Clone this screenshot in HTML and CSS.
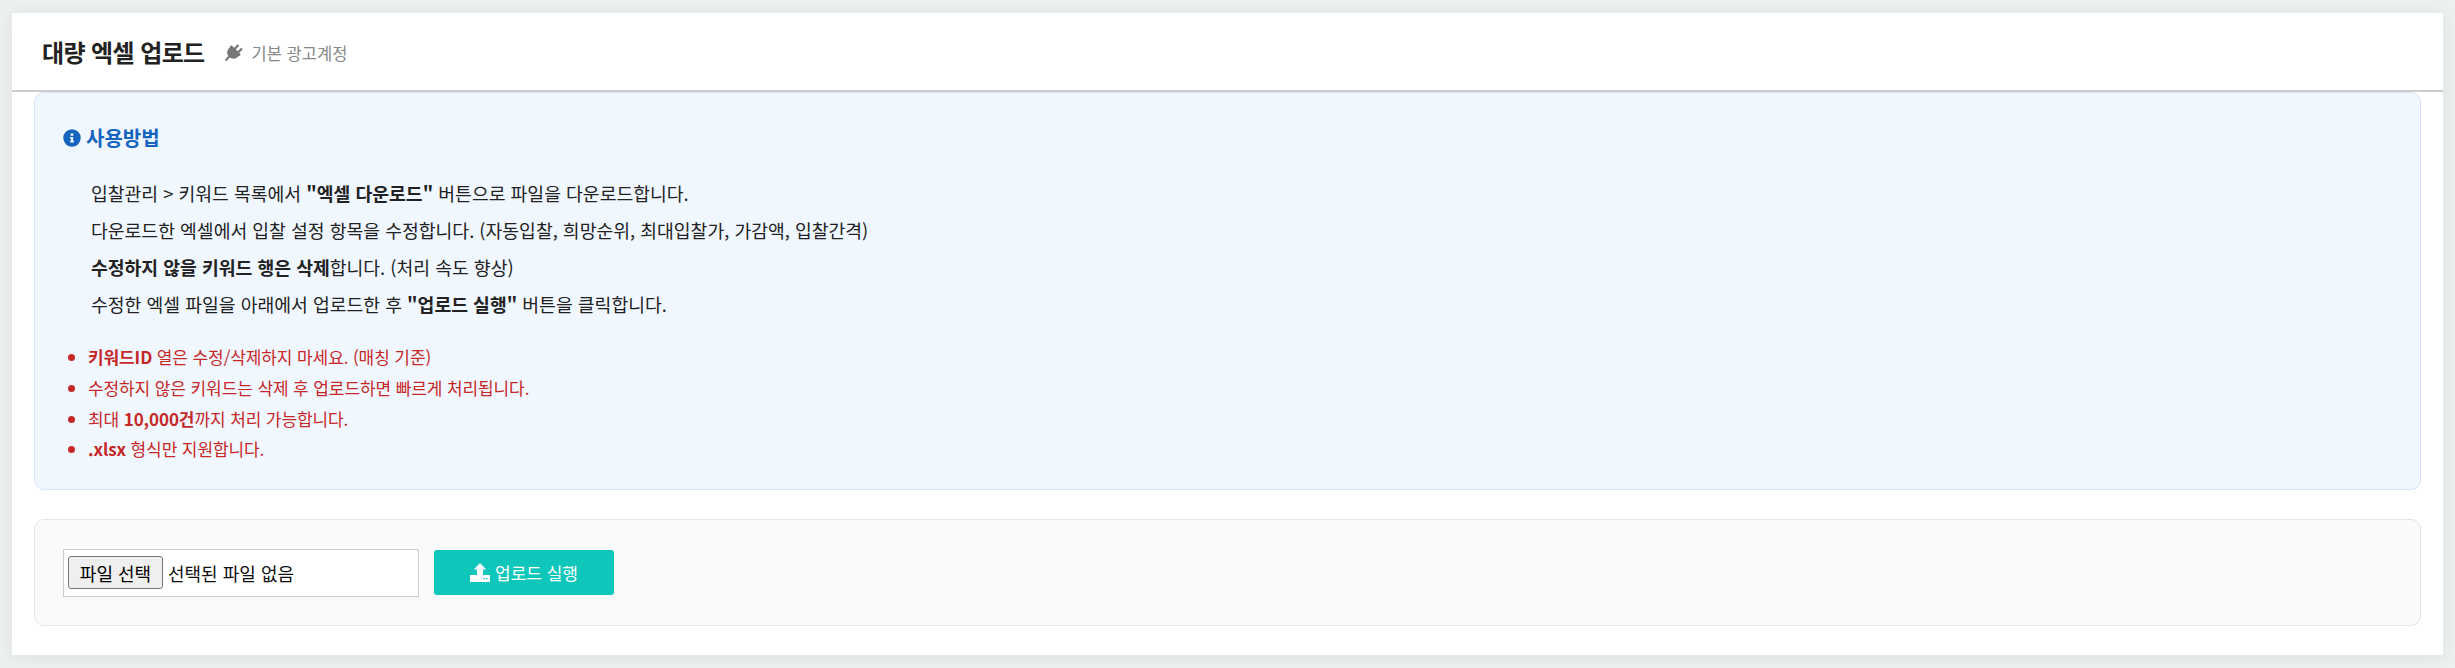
FILE: index.html
```html
<!DOCTYPE html>
<html lang="ko">
<head>
<meta charset="utf-8">
<title>대량 엑셀 업로드</title>
<link rel="stylesheet" href="styles.css">
</head>
<body>
<main class="card">
  <header class="card-head">
    <h1 class="title">대량 엑셀 업로드</h1>
    <span class="account">
      <svg class="plug" viewBox="50 5 457 457"><g transform="rotate(45 256 256)"><path d="M166 0h56v130h68V0h56v130h40c12 0 22 10 22 22v20c0 10-6 18-14 21v27c0 85-56 150-130 162v130h-54V382C136 370 80 305 80 220v-27c-8-3-14-11-14-21v-20c0-12 10-22 22-22h78z"/></g></svg>
      기본 광고계정
    </span>
  </header>
  <section class="info">
    <h2 class="info-title">
      <svg class="info-icon" viewBox="0 0 512 512"><path d="M256 8a248 248 0 1 0 0 496 248 248 0 0 0 0-496zm0 110a42 42 0 1 1 0 84 42 42 0 0 1 0-84zm56 254c0 7-5 12-12 12h-88c-7 0-12-5-12-12v-24c0-7 5-12 12-12h12v-64h-12c-7 0-12-5-12-12v-24c0-7 5-12 12-12h64c7 0 12 5 12 12v100h12c7 0 12 5 12 12z"/></svg>
      사용방법
    </h2>
    <ol class="steps">
      <li>입찰관리 &gt; 키워드 목록에서 <b>"엑셀 다운로드"</b> 버튼으로 파일을 다운로드합니다.</li>
      <li>다운로드한 엑셀에서 입찰 설정 항목을 수정합니다. (자동입찰, 희망순위, 최대입찰가, 가감액, 입찰간격)</li>
      <li><b>수정하지 않을 키워드 행은 삭제</b>합니다. (처리 속도 향상)</li>
      <li>수정한 엑셀 파일을 아래에서 업로드한 후 <b>"업로드 실행"</b> 버튼을 클릭합니다.</li>
    </ol>
    <ul class="notes">
      <li><b>키워드ID</b> 열은 수정/삭제하지 마세요. (매칭 기준)</li>
      <li>수정하지 않은 키워드는 삭제 후 업로드하면 빠르게 처리됩니다.</li>
      <li>최대 <b>10,000건</b>까지 처리 가능합니다.</li>
      <li><b>.xlsx</b> 형식만 지원합니다.</li>
    </ul>
  </section>
  <section class="upload">
    <div class="file">
      <button class="file-btn" type="button">파일 선택</button>
      <span class="file-name">선택된 파일 없음</span>
    </div>
    <button class="run" type="button">
      <svg class="up-icon" viewBox="0 0 20 19"><path fill-rule="evenodd" d="M10 0l6.2 6.5H13V12h7v6c0 .6-.4 1-1 1H1c-.6 0-1-.4-1-1v-6h7V6.500H3.800zM13.500 15v1.200h1.500V15zM16 15v1.200h1.500V15z"/></svg>
      업로드 실행
    </button>
  </section>
</main>
</body>
</html>
```

FILE: styles.css
```css
* { box-sizing: border-box; }
html, body { height: 100%; }
body {
  margin: 0;
  padding: 13px 12px;
  background: #ecf0ef;
  font-family: "Noto Sans CJK KR", "Noto Sans", sans-serif;
  color: #222;
}
.card {
  height: 642px;
  background: #fff;
  box-shadow: 0 2px 16px rgba(0, 30, 20, 0.07);
}
.card-head {
  height: 79px;
  padding: 0 30px;
  display: flex;
  align-items: center;
  gap: 20px;
  border-bottom: 2px solid #ccc;
}
.title {
  margin: 0;
  font-size: 24px;
  font-weight: 700;
  line-height: 32px;
  letter-spacing: -0.6px;
  color: #222;
}
.account {
  display: flex;
  align-items: center;
  gap: 9px;
  font-size: 16.5px;
  color: #888;
  padding-top: 2px;
}
.plug { width: 18px; height: 18px; fill: #777; }
.info {
  margin: 0 22px;
  height: 398px;
  padding: 31px 28px 0;
  background: #f0f7ff;
  border: 1px solid #d5e5f7;
  border-radius: 10px;
}
.info-title {
  margin: 0;
  display: flex;
  align-items: center;
  gap: 5px;
  font-size: 20px;
  font-weight: 700;
  line-height: 28px;
  color: #1565c0;
}
.info-icon { width: 18px; height: 18px; fill: #1565c0; }
.steps {
  list-style: none;
  margin: 23px 0 0;
  padding: 0 0 0 28px;
  font-size: 18.25px;
  line-height: 37px;
  color: #222;
}
.notes {
  margin: 19px 0 0;
  padding: 0 0 0 25px;
  font-size: 17px;
  line-height: 30.8px;
  letter-spacing: -0.1px;
  color: #c62828;
}
.upload {
  margin: 29px 22px 0;
  height: 107px;
  padding: 0 28px;
  display: flex;
  align-items: center;
  gap: 15px;
  background: #fafafa;
  border: 1px solid #e5e5e5;
  border-radius: 10px;
}
.file {
  width: 356px;
  height: 48px;
  padding: 0 4px;
  display: flex;
  align-items: center;
  gap: 5px;
  background: #fff;
  border: 1px solid #ccc;
}
.file-btn {
  width: 95px;
  height: 33px;
  padding: 0;
  font: 18px "Noto Sans CJK KR", sans-serif;
  color: #000;
  background: #efefef;
  border: 1px solid #767676;
  border-radius: 3px;
}
.file-name { font-size: 18px; color: #111; }
.run {
  width: 180px;
  height: 45px;
  padding: 0;
  display: flex;
  align-items: center;
  justify-content: center;
  gap: 5px;
  font: 17px "Noto Sans CJK KR", sans-serif;
  color: #fff;
  background: #0fc6bb;
  border: 0;
  border-radius: 3px;
}
.up-icon { width: 20px; height: 19px; fill: #fff; }
```
